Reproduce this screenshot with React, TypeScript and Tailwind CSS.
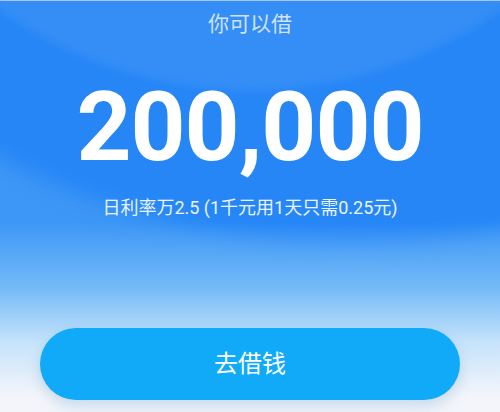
import React from 'react';

const cjk = '"Roboto", "Noto Sans CJK SC", sans-serif';

export default function App() {
  return (
    <div className="relative w-[500px] h-[412px] overflow-hidden bg-[#3d97f6]" style={{ fontFamily: cjk }}>
      {/* background shapes */}
      <div className="absolute left-[-395px] top-[-1245px] w-[1490px] h-[1490px] rounded-full bg-[#2686f6] blur-[10px]" />
      <div className="absolute left-[-180px] top-[-770px] w-[860px] h-[860px] rounded-full bg-white/[0.07] blur-[5px]" />
      <div className="absolute inset-0 bg-[linear-gradient(to_bottom,transparent_54%,rgba(130,195,247,0.8)_70%,rgba(205,231,251,0.95)_83%,#f3f5fa_96%)]" />
      <div className="absolute left-0 right-0 top-0 h-px bg-[#a6c7f1]" />

      <div className="relative flex flex-col items-center">
        <div className="mt-[10px] text-[21px] leading-[29px] text-[#cfe3fb]">你可以借</div>
        <div className="mt-[40px] text-[96px] leading-[96px] font-bold text-white tracking-[-1px]" style={{ fontFamily: 'Roboto, sans-serif' }}>
          200,000
        </div>
        <div className="mt-[20px] text-[18px] leading-[26px] text-white/90">
          日利率万2.5 (1千元用1天只需0.25元)
        </div>
        <button className="mt-[107px] w-[420px] h-[72px] rounded-full bg-[#10aaf8] text-white text-[24px] shadow-[0_6px_14px_rgba(40,120,190,0.22)] flex items-center justify-center">
          去借钱
        </button>
      </div>
    </div>
  );
}
